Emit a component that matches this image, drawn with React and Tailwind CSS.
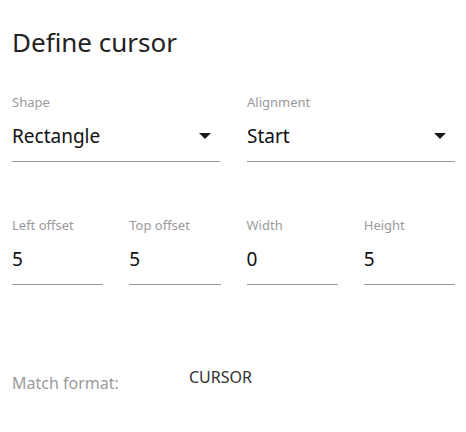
const labelCls = "block text-[13px] leading-[16px] text-[#9a9a9a]";

const Caret = () => (
  <svg width="12" height="6" viewBox="0 0 12 6" className="mr-[9px] shrink-0">
    <polygon points="0,0 12,0 6,6" fill="#1a1a1a" />
  </svg>
);

const SelectField = ({ label, value }) => (
  <div className="flex flex-col">
    <span className={labelCls}>{label}</span>
    <div className="mt-[14px] flex items-center justify-between border-b border-[#9a9a9a] pb-[13px]">
      <span className="text-[19px] leading-[24px] text-[#111]">{value}</span>
      <Caret />
    </div>
  </div>
);

const NumberField = ({ label, value }) => (
  <div className="flex flex-col">
    <span className={labelCls}>{label}</span>
    <div className="mt-[14px] border-b border-[#9a9a9a] pb-[13px]">
      <span className="block text-[19px] leading-[24px] text-[#111]">{value}</span>
    </div>
  </div>
);

export default function App() {
  return (
    <div
      className="w-[466px] h-[432px] bg-white px-[12px] pr-[11px] pt-[24px] overflow-hidden"
      style={{ fontFamily: '"Noto Sans", "Open Sans", sans-serif' }}
    >
      <h1 className="text-[26px] leading-[36px] text-[#222] font-normal">Define cursor</h1>

      <div className="mt-[34px] grid grid-cols-2 gap-x-[27px]">
        <SelectField label="Shape" value="Rectangle" />
        <SelectField label="Alignment" value="Start" />
      </div>

      <div className="mt-[55px] grid grid-cols-4 gap-x-[26px]">
        <NumberField label="Left offset" value="5" />
        <NumberField label="Top offset" value="5" />
        <NumberField label="Width" value="0" />
        <NumberField label="Height" value="5" />
      </div>

      <div className="mt-[82px] flex items-start">
        <span className="mt-[6px] w-[177px] text-[16px] leading-[20px] text-[#9a9a9a]">Match format:</span>
        <span className="text-[16px] leading-[20px] text-[#333]">CURSOR</span>
      </div>
    </div>
  );
}
